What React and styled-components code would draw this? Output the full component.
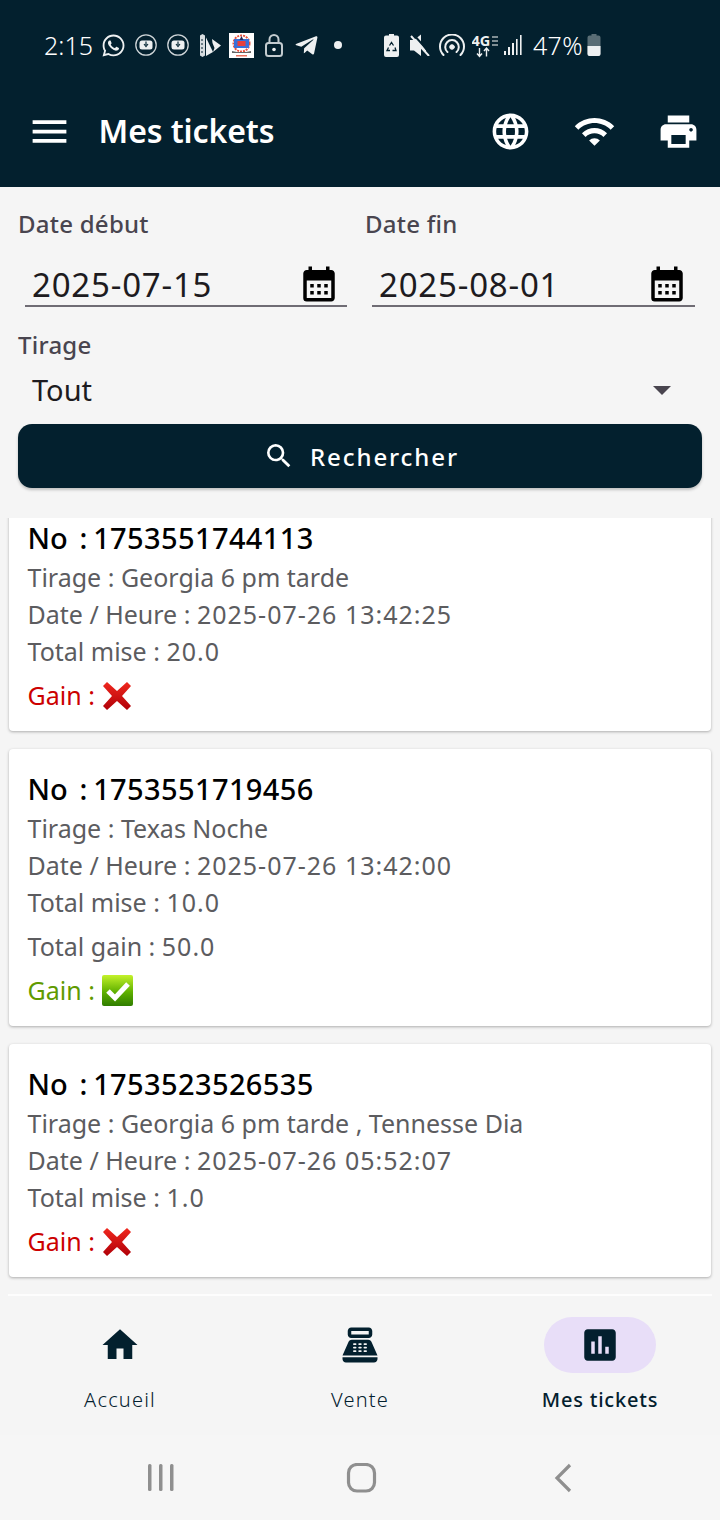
import React from "react";
import styled, { createGlobalStyle } from "styled-components";
import {
  MdMenu, MdLanguage, MdWifi, MdPrint, MdCalendarMonth, MdSearch, MdHome, MdPointOfSale, MdAssessment,
} from "react-icons/md";
import { FaWhatsapp, FaTelegramPlane } from "react-icons/fa";

const NAVY = "#03202e";
const FONT = `"Noto Sans", "Open Sans", sans-serif`;

const Global = createGlobalStyle`
  html, body { margin: 0; padding: 0; background: #f5f5f5; }
  * { box-sizing: border-box; }
  body { font-family: ${FONT}; }
`;

const Screen = styled.div`
  width: 720px; height: 1520px; display: flex; flex-direction: column; overflow: hidden; background: #f5f5f5;
`;
const Header = styled.header`
  height: 187px; background: ${NAVY}; color: #fff; flex: none;
`;
const StatusBar = styled.div`
  height: 60px; margin-top: 15px; padding-left: 44px; display: flex; align-items: center; color: #eef0f1;
`;
const StatusText = styled.span`
  font-size: 25px; line-height: 30px; font-weight: 300; color: #fff; margin-left: ${p => p.$ml || 0}px; letter-spacing: ${p => p.$ls || 0}px;
`;
const Slot = styled.span`
  display: inline-flex; align-items: center; justify-content: center; flex: none;
  width: ${p => p.$w}px; height: 30px; margin-left: ${p => p.$ml || 0}px;
  & > svg { flex: none; }
`;
const AppBar = styled.div`
  height: 112px; display: flex; align-items: center; padding-left: 27px;
`;
const Title = styled.h1`
  margin: 0 0 0 26.5px; flex: 1; font-size: 32px; line-height: 40px; font-weight: 600; color: #fff; letter-spacing: -.1px;
`;
const ActionSlot = styled.span`
  width: 84px; height: 84px; display: flex; align-items: center; justify-content: center;
`;

const Form = styled.section`
  padding: 20px 18px 0; flex: none;
`;
const DateGrid = styled.div`
  display: grid; grid-template-columns: 336px 337px; column-gap: 11px;
`;
const Label = styled.div`
  font-size: 24px; line-height: 34px; font-weight: 500; color: #49454f; margin-top: ${p => p.$mt || 0}px; letter-spacing: .25px;
`;
const DateField = styled.div`
  margin: 22px 7px 0; height: 44px; display: flex; align-items: center; justify-content: space-between;
  padding: 0 7px; border-bottom: 2px solid #6f6c74;
`;
const DateValue = styled.span`
  font-size: 33px; line-height: 44px; color: #1d1b20; font-weight: 400; letter-spacing: .8px; position: relative; top: 1px;
`;
const SelectValue = styled.span`
  font-size: 29px; line-height: 44px; color: #1d1b20; font-weight: 400;
`;
const SelectRow = styled.div`
  height: 56px; padding: 0 31px 0 14px; display: flex; align-items: center; justify-content: space-between;
`;
const Caret = styled.span`
  width: 0; height: 0; border-left: 9px solid transparent; border-right: 9px solid transparent; border-top: 9px solid #49454f;
`;
const SearchButton = styled.button`
  margin-top: 6px; width: 100%; height: 64px; padding: 0 0 0 2px; border: 0; border-radius: 14px; background: ${NAVY}; color: #fff;
  display: flex; align-items: center; justify-content: center; gap: 15px; font-family: ${FONT};
  font-size: 24px; font-weight: 500; letter-spacing: 1.9px; box-shadow: 0 2px 3px rgba(0,0,0,.22);
`;

const List = styled.section`
  flex: 1; min-height: 0; margin-top: 30px; overflow: hidden; padding: 0 9px; display: flex; flex-direction: column; gap: 18px;
`;
const Card = styled.article`
  flex: none; background: #fff; border-radius: 4px; padding: 24px 18.500px 17px;
  margin-top: ${p => p.$mt || 0}px; box-shadow: 0 1px 3px rgba(0,0,0,.3);
`;
const TicketNo = styled.div`
  font-size: 29px; line-height: 32px; font-weight: 500; color: #000; margin-bottom: 5px; white-space: pre; word-spacing: -1.700px;
`;
const TicketDigits = styled.span`
  letter-spacing: .38px;
`;
const Line = styled.div`
  font-size: 25px; line-height: 37px; color: #5c5c5f; margin-top: ${p => p.$mt || 0}px;
`;
const Num = styled.span`
  letter-spacing: 1px;
`;
const Gain = styled.div`
  font-size: 25px; line-height: 37px; margin-top: 7px; color: ${p => p.$win ? "#5f9a00" : "#cc0000"};
  display: flex; align-items: center; gap: 7px;
`;

const Divider = styled.div`
  height: 2px; margin: 0 8px; background: #fdfdfd; flex: none;
`;
const BottomNav = styled.nav`
  height: 139px; flex: none; display: grid; grid-template-columns: repeat(3, 1fr); background: #f5f5f5;
`;
const NavItem = styled.div`
  padding-top: 21px; display: flex; flex-direction: column; align-items: center; color: ${NAVY};
`;
const Pill = styled.div`
  width: 112px; height: 56px; border-radius: 28px; display: flex; align-items: center; justify-content: center;
  background: ${p => p.$active ? "#e8def8" : "transparent"};
`;
const NavLabel = styled.div`
  margin-top: 13px; font-size: 20px; line-height: 28px; letter-spacing: ${p => p.$active ? .8 : 1.200}px; font-weight: ${p => p.$active ? 500 : 300};
  color: ${NAVY}; white-space: nowrap;
`;
const SystemBar = styled.div`
  height: 85px; flex: none; padding-left: 3px; display: flex; align-items: center; justify-content: center; gap: 161px; background: #f6f6f6;
`;

const Logo = () => (
  <svg width="25" height="25" viewBox="0 0 25 25">
    <rect width="25" height="25" fill="#fff" />
    <circle cx="12.500" cy="10.500" r="8" fill="none" stroke="#e8503c" strokeWidth="2" strokeDasharray="2 1" />
    <path d="M5 6h15v9H5z" fill="#3a6fd8" />
    <path d="M12.500 3l2 4h-4z" fill="#2a2a5a" />
    <rect x="8.500" y="8" width="8" height="5" fill="#e8403c" />
    <path d="M3 18l5 1h9l5-1v2H3z" fill="#666" />
    <path d="M7 22h11v1.500H7z" fill="#e8705c" />
  </svg>
);
const CircleDownload = () => (
  <svg width="22" height="22" viewBox="0 0 22 22" fill="none">
    <circle cx="11" cy="11" r="10.200" stroke="#cfd5d8" strokeWidth="1.300" />
    <rect x="4.500" y="6.500" width="13" height="9" rx="2.500" fill="#eef0f1" />
    <path d="M11 7.500v3.500M9 10l2 2.500 2-2.500" stroke="#0b2a38" strokeWidth="1.200" />
  </svg>
);
const BitBrand = () => (
  <svg width="21" height="23" viewBox="0 0 21 23" fill="none">
    <path d="M0 1.500l2.500-1.500 2.500 1.500v20l-2.500 1.500-2.500-1.500z" fill="#d7dcdf" />
    <path d="M1 6h2M1 10h2M1 14h2M1 18h2" stroke="#03202e" strokeWidth="1" />
    <path d="M6 3.500l7 14.500-7 4z" fill="#eef0f1" />
    <path d="M12 5l9 6.500-8 6.500 1.500-4-2-5z" fill="#eef0f1" />
  </svg>
);
const Lock = () => (
  <svg width="18" height="23" viewBox="0 0 18 23" fill="none" stroke="#c3cbcf" strokeWidth="2">
    <path d="M4.500 9V5.500a4.500 4.500 0 0 1 9 0V9" />
    <rect x="1" y="9" width="16" height="13" rx="2.500" />
    <circle cx="9" cy="15.500" r="1.800" fill="#eef0f1" stroke="none" />
  </svg>
);
const RecycleBattery = () => (
  <svg width="15" height="23" viewBox="0 0 15 23">
    <path d="M5 0h5v1.500h3a2 2 0 0 1 2 2V21a2 2 0 0 1-2 2H2a2 2 0 0 1-2-2V3.500a2 2 0 0 1 2-2h3z" fill="#eef0f1" />
    <path d="M5.500 11.500l2-3 2 3M11 13.500l1 3H8.500M6 16.500H3l1.500-3" stroke="#03202e" strokeWidth="1.300" fill="none" />
  </svg>
);
const Mute = () => (
  <svg width="20" height="22" viewBox="0 0 20 22">
    <path d="M0 6h4l7-5.500v9l5 7v1h-2l-3-3v7.500l-7-5.500H0z" fill="#eef0f1" />
    <path d="M1 2l18 20" stroke="#eef0f1" strokeWidth="2" />
    <path d="M3.500 .5l17 19" stroke="#03202e" strokeWidth="2" />
  </svg>
);
const Hotspot = () => (
  <svg width="26" height="22" viewBox="0 0 26 22" fill="none" stroke="#eef0f1" strokeWidth="2" strokeLinecap="round">
    <path d="M4.500 21A12 12 0 1 1 21.500 21" />
    <path d="M8.500 18A6.800 6.800 0 1 1 17.500 18" />
    <circle cx="13" cy="13" r="2.300" fill="#eef0f1" strokeWidth="1" />
  </svg>
);
const NetworkIcon = () => (
  <svg width="27" height="30" viewBox="0 0 27 30" fill="none">
    <text x="-.5" y="16" fontFamily={FONT} fontSize="14.500" fontWeight="700" fill="#eef0f1">4G</text>
    <path d="M20 7h6M20 11h6M20 15h6" stroke="#aab3b7" strokeWidth="1.500" />
    <path d="M7.500 18v8.500M5 23.500l2.500 3 2.500-3M14.500 26.500v-8.500M12 21l2.500-3 2.500 3" stroke="#eef0f1" strokeWidth="1.400" />
  </svg>
);
const Signal = () => (
  <svg width="18" height="20" viewBox="0 0 18 20" fill="#eef0f1">
    <rect x="0" y="16" width="2" height="4" /><rect x="4" y="12" width="2" height="8" />
    <rect x="8" y="8" width="2" height="12" /><rect x="12" y="4" width="1.600" height="16" /><rect x="16" y="0" width="1.600" height="20" />
  </svg>
);
const Battery = () => (
  <svg width="14" height="22" viewBox="0 0 14 22">
    <path d="M4.500 0h5v1.500h2a2 2 0 0 1 2 2V20a2 2 0 0 1-2 2h-9a2 2 0 0 1-2-2V3.500a2 2 0 0 1 2-2h2z" fill="#5a6d75" />
    <path d="M.5 12h13v8a2 2 0 0 1-2 2h-9a2 2 0 0 1-2-2z" fill="#eef0f1" />
  </svg>
);
const CrossEmoji = () => (
  <svg width="30" height="30" viewBox="0 0 30 30">
    <defs><linearGradient id="cr" x1="0" y1="0" x2="0" y2="1"><stop offset="0" stopColor="#f0281e" /><stop offset="1" stopColor="#b00008" /></linearGradient></defs>
    <path d="M5 1l10 9 10-9 4 4-9 10 9 10-4 4-10-9-10 9-4-4 9-10-9-10z" fill="url(#cr)" />
  </svg>
);
const CheckEmoji = () => (
  <svg width="31" height="31" viewBox="0 0 31 31">
    <defs><linearGradient id="ck" x1="0" y1="0" x2="0" y2="1"><stop offset="0" stopColor="#c4f22a" /><stop offset=".55" stopColor="#5fb000" /><stop offset="1" stopColor="#2f7d00" /></linearGradient></defs>
    <rect width="31" height="31" rx="2" fill="url(#ck)" />
    <path d="M6 16l7 7L26 9" fill="none" stroke="#fff" strokeWidth="5" />
  </svg>
);

const Ticket = ({ no, tirage, date, mise, gain, win, mt }) => (
  <Card $mt={mt}>
    <TicketNo>{"No  : "}<TicketDigits>{no}</TicketDigits></TicketNo>
    <Line>Tirage : {tirage}</Line>
    <Line>Date / Heure : <Num>{date}</Num></Line>
    <Line>Total mise : <Num>{mise}</Num></Line>
    {gain && <Line $mt={7}>Total gain : <Num>{gain}</Num></Line>}
    <Gain $win={win}>Gain : {win ? <CheckEmoji /> : <CrossEmoji />}</Gain>
  </Card>
);

const DateInput = ({ label, value }) => (
  <div>
    <Label>{label}</Label>
    <DateField>
      <DateValue>{value}</DateValue>
      <MdCalendarMonth size={42} color="#000" />
    </DateField>
  </div>
);

export default function App() {
  return (
    <Screen>
      <Global />
      <Header>
        <StatusBar>
          <StatusText>2:15</StatusText>
          <Slot $w={22} $ml={10}><FaWhatsapp size={25} /></Slot>
          <Slot $w={22} $ml={10}><CircleDownload /></Slot>
          <Slot $w={22} $ml={10}><CircleDownload /></Slot>
          <Slot $w={21} $ml={11}><BitBrand /></Slot>
          <Slot $w={25} $ml={8}><Logo /></Slot>
          <Slot $w={18} $ml={11}><Lock /></Slot>
          <Slot $w={23} $ml={12}><FaTelegramPlane size={25} /></Slot>
          <Slot $w={8} $ml={16}><svg width="8" height="8"><circle cx="4" cy="4" r="4" fill="#eef0f1" /></svg></Slot>
          <Slot $w={15} $ml={42}><RecycleBattery /></Slot>
          <Slot $w={20} $ml={11}><Mute /></Slot>
          <Slot $w={26} $ml={9}><Hotspot /></Slot>
          <Slot $w={27} $ml={7}><NetworkIcon /></Slot>
          <Slot $w={18} $ml={5}><Signal /></Slot>
          <StatusText $ml={11} $ls={.4}>47%</StatusText>
          <Slot $w={14} $ml={4}><Battery /></Slot>
        </StatusBar>
        <AppBar>
          <MdMenu size={45} color="#fff" />
          <Title>Mes tickets</Title>
          <ActionSlot><MdLanguage size={43} /></ActionSlot>
          <ActionSlot><MdWifi size={43} /></ActionSlot>
          <ActionSlot><MdPrint size={43} /></ActionSlot>
        </AppBar>
      </Header>

      <Form>
        <DateGrid>
          <DateInput label="Date début" value="2025-07-15" />
          <DateInput label="Date fin" value="2025-08-01" />
        </DateGrid>
        <Label $mt={21}>Tirage</Label>
        <SelectRow>
          <SelectValue>Tout</SelectValue>
          <Caret />
        </SelectRow>
        <SearchButton><MdSearch size={32} /> Rechercher</SearchButton>
      </Form>

      <List>
        <Ticket mt={-20} no="1753551744113" tirage="Georgia 6 pm tarde" date="2025-07-26 13:42:25" mise="20.0" />
        <Ticket no="1753551719456" tirage="Texas Noche" date="2025-07-26 13:42:00" mise="10.0" gain="50.0" win />
        <Ticket no="1753523526535" tirage="Georgia 6 pm tarde , Tennesse Dia" date="2025-07-26 05:52:07" mise="1.0" />
      </List>

      <Divider />
      <BottomNav>
        <NavItem><Pill><MdHome size={42} /></Pill><NavLabel>Accueil</NavLabel></NavItem>
        <NavItem><Pill><MdPointOfSale size={42} /></Pill><NavLabel>Vente</NavLabel></NavItem>
        <NavItem><Pill $active><MdAssessment size={42} /></Pill><NavLabel $active>Mes tickets</NavLabel></NavItem>
      </BottomNav>
      <SystemBar>
        <svg width="40" height="30" viewBox="0 0 40 30" fill="#8f8f8f">
          <rect x="7" y="1" width="3.500" height="27" rx="1.500" /><rect x="18" y="1" width="3.500" height="27" rx="1.500" /><rect x="29" y="1" width="3.500" height="27" rx="1.500" />
        </svg>
        <svg width="40" height="30" viewBox="0 0 40 30" fill="none" stroke="#8f8f8f" strokeWidth="3.200">
          <rect x="6.500" y="1.500" width="26" height="26.500" rx="8.500" />
        </svg>
        <svg width="40" height="30" viewBox="0 0 40 30" fill="none" stroke="#8f8f8f" strokeWidth="3.200">
          <path d="M27 2L14 15l13 13" />
        </svg>
      </SystemBar>
    </Screen>
  );
}
